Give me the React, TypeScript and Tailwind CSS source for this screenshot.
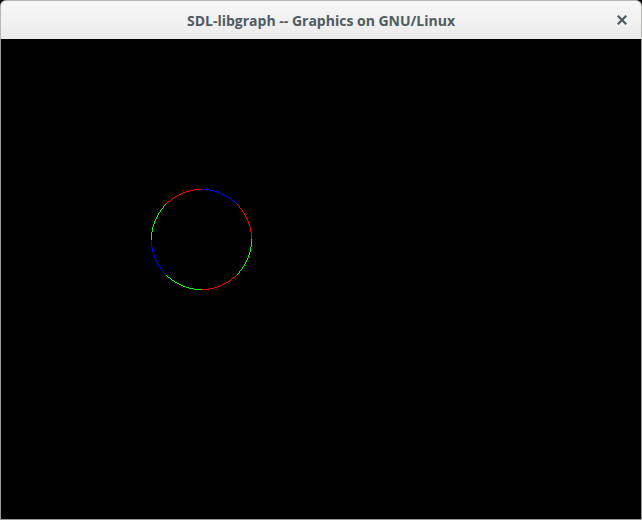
import React from 'react'

// midpoint circle, each octant gets its own colour
const RED = '#ff0000'
const GREEN = '#00ff00'
const BLUE = '#0000ff'

function circlePoints(cx: number, cy: number, r: number) {
  const pts: { x: number; y: number; c: string }[] = []
  let x = 0
  let y = r
  let d = 1 - r
  while (x < y) {
    pts.push({ x: cx + x, y: cy - y, c: BLUE })
    pts.push({ x: cx - x, y: cy - y, c: RED })
    pts.push({ x: cx + y, y: cy - x, c: RED })
    pts.push({ x: cx + y, y: cy + x, c: GREEN })
    pts.push({ x: cx + x, y: cy + y, c: RED })
    pts.push({ x: cx - x, y: cy + y, c: GREEN })
    pts.push({ x: cx - y, y: cy + x, c: BLUE })
    pts.push({ x: cx - y, y: cy - x, c: GREEN })
    x++
    if (d < 0) {
      d += 2 * x + 1
    } else {
      y--
      d += 2 * (x - y) + 1
    }
  }
  return pts
}

export default function App() {
  const pts = circlePoints(200, 200, 50)

  return (
    <div className="w-[642px] h-[520px] flex flex-col bg-black overflow-hidden">
      {/* Title bar */}
      <div className="h-[39px] shrink-0 rounded-t-[6px] border border-b-0 border-[#b6b6b3] bg-gradient-to-b from-[#f7f7f7] to-[#ebebeb] flex items-center relative">
        <div
          className="flex-1 text-center text-[14px] font-bold text-[#4f5b61] leading-none pt-[1px]"
          style={{ fontFamily: '"Open Sans", "DejaVu Sans", sans-serif' }}
        >
          SDL-libgraph -- Graphics on GNU/Linux
        </div>
        <div className="absolute right-[14px] top-[14px] w-[10px] h-[10px]">
          <svg width="10" height="10" viewBox="0 0 10 10">
            <path d="M1.5 1.5 L8.5 8.5 M8.5 1.5 L1.5 8.5" stroke="#4f5b61" strokeWidth="2.2" strokeLinecap="square" />
          </svg>
        </div>
      </div>

      {/* Canvas */}
      <div className="flex-1 border-x border-b border-[#9a9a9a] bg-black">
        <svg width="640" height="480" viewBox="0 0 640 480" shapeRendering="crispEdges">
          {pts.map((p, i) => (
            <rect key={i} x={p.x} y={p.y} width="1" height="1" fill={p.c} />
          ))}
        </svg>
      </div>
    </div>
  )
}
